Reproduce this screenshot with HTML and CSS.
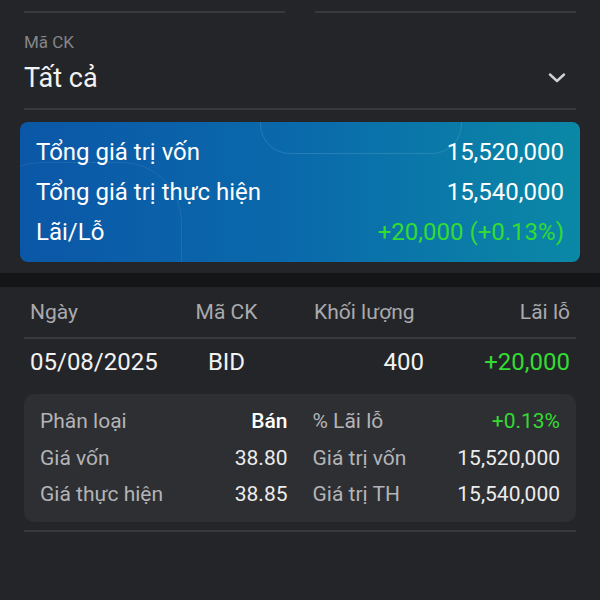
FILE: index.html
```html
<!DOCTYPE html>
<html>
<head>
  <title>Lãi lỗ đã thực hiện</title>
  <link rel="stylesheet" href="styles.css">
</head>
<body>
  <div class="top-lines">
    <div class="top-line"></div>
    <div class="top-line"></div>
  </div>

  <div class="filter">
    <div class="filter-label">Mã CK</div>
    <div class="filter-value">
      <span>Tất cả</span>
      <svg class="chevron" width="18" height="10" viewBox="0 0 18 10">
        <path d="M2 1.5 L9 8 L16 1.5" fill="none" stroke="#d0d1d3" stroke-width="2.4" stroke-linecap="round" stroke-linejoin="round"/>
      </svg>
    </div>
  </div>

  <div class="summary">
    <div class="summary-row"><span>Tổng giá trị vốn</span><span>15,520,000</span></div>
    <div class="summary-row"><span>Tổng giá trị thực hiện</span><span>15,540,000</span></div>
    <div class="summary-row"><span>Lãi/Lỗ</span><span class="up">+20,000 (+0.13%)</span></div>
  </div>

  <div class="band"></div>

  <div class="list">
    <div class="list-head">
      <span>Ngày</span>
      <span class="c2">Mã CK</span>
      <span class="c3">Khối lượng</span>
      <span class="c4">Lãi lỗ</span>
    </div>
    <div class="list-row">
      <span>05/08/2025</span>
      <span class="c2">BID</span>
      <span class="c3">400</span>
      <span class="c4 up">+20,000</span>
    </div>

    <div class="detail">
      <div class="detail-cell"><span class="k">Phân loại</span><span class="v strong">Bán</span></div>
      <div class="detail-cell"><span class="k">% Lãi lỗ</span><span class="v up">+0.13%</span></div>
      <div class="detail-cell"><span class="k">Giá vốn</span><span class="v">38.80</span></div>
      <div class="detail-cell"><span class="k">Giá trị vốn</span><span class="v">15,520,000</span></div>
      <div class="detail-cell"><span class="k">Giá thực hiện</span><span class="v">38.85</span></div>
      <div class="detail-cell"><span class="k">Giá trị TH</span><span class="v">15,540,000</span></div>
    </div>
    <div class="list-end"></div>
  </div>
</body>
</html>
```

FILE: styles.css
```css
body {
  margin: 0;
  background: #242528;
  font-family: Roboto, "Noto Sans", sans-serif;
  color: #f2f2f2;
}
.up { color: #33dc33; }

.top-lines { display: flex; gap: 30px; padding: 11px 24px 0; }
.top-line { flex: 1; height: 2px; background: #38393c; }

.filter { margin: 0 24px; padding-top: 19px; border-bottom: 2px solid #38393c; }
.filter-label { font-size: 17px; line-height: 20px; color: #85868a; }
.filter-value {
  display: flex; justify-content: space-between; align-items: center;
  font-size: 27px; height: 52px; padding-bottom: 4px;
}
.chevron { margin-right: 10px; }

.summary {
  position: relative; overflow: hidden;
  margin: 12px 20px 0; padding: 10px 16px;
  border-radius: 8px;
  background: linear-gradient(90deg, #0b57a7 0%, #0a6aab 50%, #0b88a6 100%);
  color: #fff;
}
.summary::before {
  content: ""; position: absolute; left: 240px; top: -30px;
  width: 200px; height: 60px;
  border: 1px solid rgba(255,255,255,0.12); border-radius: 30px;
}
.summary::after {
  content: ""; position: absolute; left: -40px; top: 40px;
  width: 200px; height: 160px;
  border: 1px solid rgba(255,255,255,0.08); border-radius: 60px;
}
.summary-row {
  position: relative; z-index: 1;
  display: flex; justify-content: space-between; align-items: center;
  height: 40px; font-size: 24px;
}

.band { height: 14px; margin-top: 11px; background: #141517; }

.list { padding: 0 24px; }
.list-head, .list-row {
  display: grid; grid-template-columns: 165px 63px 1fr 146px;
  padding: 0 6px; align-items: center;
}
.list-head {
  height: 50px; font-size: 21px; color: #a9aaad;
  border-bottom: 2px solid #38393c;
}
.list-row { height: 46px; font-size: 24px; }
.c2 { text-align: center; white-space: nowrap; }
.list-head .c3 { padding-left: 56px; white-space: nowrap; }
.list-row .c3 { text-align: right; }
.c4 { text-align: right; }

.detail {
  display: grid; grid-template-columns: 1fr 1fr; column-gap: 25px;
  margin-top: 9px; padding: 9px 16px;
  background: #2e2f32; border-radius: 10px;
}
.detail-cell {
  display: flex; justify-content: space-between; align-items: center;
  height: 36.5px; font-size: 21px;
}
.detail-cell .k { color: #b3b4b7; }
.detail-cell .v { color: #ececec; }
.detail-cell .v.up { color: #33dc33; }
.detail-cell .v.strong { color: #fff; font-weight: 500; }
.list-end { height: 2px; margin-top: 8px; background: #38393c; }
```
